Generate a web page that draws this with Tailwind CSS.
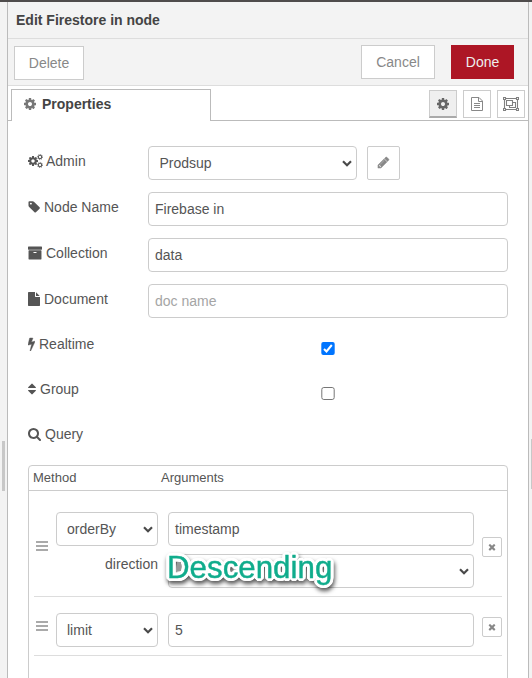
<!DOCTYPE html>
<html lang="en">
<head>
<meta charset="utf-8">
<title>Edit Firestore in node</title>
<script src="https://cdn.jsdelivr.net/npm/@tailwindcss/browser@4"></script>
</head>
<body class="w-[532px] h-[678px] overflow-hidden bg-[#f3f3f3] font-['Liberation_Sans',Arial,sans-serif] text-[14px] leading-5 text-[#555]">
<svg class="hidden">
  <symbol id="cog" viewBox="128 128 1536 1536"><path d="M1152 896q0-106-75-181t-181-75-181 75-75 181 75 181 181 75 181-75 75-181zm512-109v222q0 12-8 23t-20 13l-185 28q-19 54-39 91 35 50 107 138 10 12 10 25t-9 23q-27 37-99 108t-94 71q-12 0-26-9l-138-108q-44 23-91 38-16 136-29 186-7 28-36 28h-222q-14 0-24.5-8.5t-11.5-21.5l-28-184q-49-16-90-37l-141 107q-10 9-25 9-14 0-25-11-126-114-165-168-7-10-7-23 0-12 8-23 15-21 51-66.5t54-70.5q-27-50-41-99l-183-27q-13-2-21-12.5t-8-23.5v-222q0-12 8-23t19-13l186-28q14-46 39-92-40-57-107-138-10-12-10-24 0-10 9-23 26-36 98.500-107.500t94.500-71.500q13 0 26 10l138 107q44-23 91-38 16-136 29-186 7-28 36-28h222q14 0 24.500 8.500t11.500 21.500l28 184q49 16 90 37l142-107q9-9 24-9 13 0 25 10 129 119 165 170 7 8 7 22 0 12-8 23-15 21-51 66.500t-54 70.500q26 50 41 98l183 28q13 2 21 12.500t8 23.500z"/></symbol>
  <symbol id="times" viewBox="0 0 1792 1792"><path d="M1490 1322q0 40-28 68l-136 136q-28 28-68 28t-68-28l-294-294-294 294q-28 28-68 28t-68-28l-136-136q-28-28-28-68t28-68l294-294-294-294q-28-28-28-68t28-68l136-136q28-28 68-28t68 28l294 294 294-294q28-28 68-28t68 28l136 136q28 28 28 68t-28 68l-294 294 294 294q28 28 28 68z"/></symbol>
  <symbol id="chev" viewBox="0 0 10 7"><path d="M1 1.300L5 5.200 9 1.300" fill="none" stroke="#4a4a4a" stroke-width="2.200"/></symbol>
</svg>
<div class="h-[2px] bg-[#4f4c4c]"></div>
<div class="flex h-[676px]">
  <div class="w-[7px] flex items-start pt-[439px] pl-[2px]"><div class="w-[3px] h-[50px] bg-[#c8c8c8]"></div></div>
  <main class="w-[522px] border-x border-[#bbb] bg-white flex flex-col">
    <header class="h-[37px] shrink-0 bg-[#f3f3f3] border-b border-[#ddd] pl-2 pt-2 font-bold text-[#444]">Edit Firestore in node</header>
    <div class="h-[47px] shrink-0 bg-[#f3f3f3] border-b border-[#ddd] flex items-start pl-[6px] pr-[14px] pt-[6px] text-[#888]">
      <button class="mt-px w-[70px] h-[34px] border border-[#ccc] bg-white">Delete</button>
      <button class="ml-auto w-[74px] h-[34px] border border-[#ccc] bg-white">Cancel</button>
      <button class="ml-4 w-[63px] h-[34px] bg-[#ad1625] text-[#eee]">Done</button>
    </div>
    <div class="h-[35px] shrink-0 flex items-end">
      <div class="w-[3px] border-b border-[#bbb]"></div>
      <div class="w-[200px] h-[32px] border border-b-0 border-[#bbb] flex items-center pl-3 pb-[3px] font-bold text-[#444]"><svg class="w-3 h-3 fill-[#777] mr-[6px]"><use href="#cog"/></svg>Properties</div>
      <div class="flex-1 h-[32px] border-b border-[#bbb] flex justify-end gap-[6px] pt-px pr-[3px]">
        <button class="w-7 h-7 border border-b-2 border-[#ccc] border-b-[#aaa] bg-[#efefef] flex items-center justify-center"><svg class="w-3 h-3 fill-[#666]"><use href="#cog"/></svg></button>
        <button class="w-7 h-7 border border-[#ccc] bg-white flex items-center justify-center"><svg class="w-3 h-[14px]" viewBox="0 0 12 14" fill="none" stroke="#888"><path d="M.5.5h7.500l3.500 3.500v9.500h-11zM7.500.5v4h4M3 6.500h6M3 8.500h6M3 10.500h6"/></svg></button>
        <button class="w-7 h-7 border border-[#ccc] bg-white flex items-center justify-center"><svg class="w-4 h-[14px]" viewBox="0 0 16 14" fill="none" stroke="#808080" stroke-width="1.100"><path d="M3 1.500h10M3 12.500h10M1.500 3v8M14.500 3v8M.5.500h2v2h-2zM13.500.5h2v2h-2zM.5 11.500h2v2h-2zM13.500 11.500h2v2h-2zM3.500 3.500h6v5h-6zM9.500 5.500h3v5h-6v-2"/></svg></button>
      </div>
    </div>
    <form class="pl-5 pr-5 pt-[25px]">
      <div class="flex h-[46px]">
        <label class="w-[120px] pt-[5px] flex gap-[3px]"><svg class="w-[15px] h-[14px] mt-[3px] fill-[#555]" viewBox="0 0 15 14"><use href="#cog" x="0" y="2" width="10" height="10"/><g fill="none" stroke="#555"><circle cx="12" cy="3" r="1.700" stroke-width="1.100"/><circle cx="12" cy="3" r="2.600" stroke-width=".8" stroke-dasharray="1 1.040"/><circle cx="12" cy="11" r="1.700" stroke-width="1.100"/><circle cx="12" cy="11" r="2.600" stroke-width=".8" stroke-dasharray="1 1.040"/></g></svg>Admin</label>
        <div class="w-[209px] h-[34px] border border-[#ccc] rounded flex items-center justify-between pl-[10.5px] pr-[4px]">Prodsup<svg class="w-[10px] h-[7px]"><use href="#chev"/></svg></div>
        <button type="button" class="ml-[10px] w-[33px] h-[34px] border border-[#ccc] rounded-[2px] flex items-center justify-center"><svg class="w-[13px] h-[13px] mb-px ml-[-1px] fill-[#888]" viewBox="0 0 1792 1792"><path d="M491 1536l91-91-235-235-91 91v107h128v128h107zm523-928q0-22-22-22-10 0-17 7l-542 542q-7 7-7 17 0 22 22 22 10 0 17-7l542-542q7-7 7-17zm-54-192l416 416-832 832h-416v-416zm683 96q0 53-37 90l-166 166-416-416 166-165q36-38 90-38 53 0 91 38l235 234q37 39 37 91z" stroke="#888" stroke-width="60"/></svg></button>
      </div>
      <div class="flex h-[46px]">
        <label class="w-[120px] pt-[5px] flex gap-1"><svg class="w-[12px] h-[14px] mt-[3px] fill-[#555]" viewBox="64 0 1600 1792"><path d="M576 448q0-53-37.500-90.500t-90.500-37.500-90.500 37.500-37.500 90.500 37.500 90.500 90.500 37.500 90.500-37.500 37.500-90.500zm1067 576q0 53-37 90l-491 492q-39 37-91 37-53 0-90-37l-715-716q-38-37-64.500-101t-26.500-117v-416q0-52 38-90t90-38h416q53 0 117 26.500t102 64.500l715 714q37 39 37 91z"/></svg>Node Name</label>
        <div class="w-[360px] h-[34px] border border-[#ccc] rounded flex items-center pl-[6px]">Firebase in</div>
      </div>
      <div class="flex h-[46px]">
        <label class="w-[120px] pt-[5px] flex gap-1"><svg class="w-[14px] h-[14px] mt-[3px] fill-[#555]" viewBox="64 64 1664 1664"><path d="M1088 832q0-26-19-45t-45-19h-256q-26 0-45 19t-19 45 19 45 45 19h256q26 0 45-19t19-45zm576-192v960q0 26-19 45t-45 19h-1408q-26 0-45-19t-19-45v-960q0-26 19-45t45-19h1408q26 0 45 19t19 45zm64-448v256q0 26-19 45t-45 19h-1536q-26 0-45-19t-19-45v-256q0-26 19-45t45-19h1536q26 0 45 19t19 45z"/></svg>Collection</label>
        <div class="w-[360px] h-[34px] border border-[#ccc] rounded flex items-center pl-[6px]">data</div>
      </div>
      <div class="flex h-[46px]">
        <label class="w-[120px] pt-[5px] flex gap-1"><svg class="w-3 h-[14px] mt-[3px] fill-[#555]" viewBox="128 0 1536 1792"><path d="M1152 512v-472q22 14 36 28l408 408q14 14 28 36h-472zm-128 32q0 40 28 68t68 28h544v1056q0 40-28 68t-68 28h-1344q-40 0-68-28t-28-68v-1600q0-40 28-68t68-28h800v544z"/></svg>Document</label>
        <div class="w-[360px] h-[34px] border border-[#ccc] rounded flex items-center pl-[6px] text-[#a5a5a5]">doc name</div>
      </div>
      <div class="flex h-[45px]">
        <label class="w-[293px] pt-1 flex gap-1"><svg class="w-[7px] h-[14px] mt-[3px] fill-[#555]" viewBox="448 0 896 1792"><path d="M1333 566q18 20 7 44l-540 1157q-13 25-42 25-4 0-14-2-17-5-25.500-19t-4.500-30l197-808-406 101q-4 1-12 1-18 0-31-11-18-15-13-39l201-825q4-16 16.500-26.500t28.500-10.500h328q19 0 32 12.500t13 29.500q0 8-5 18l-171 463 396-98q8-2 12-2 19 0 34 15z" stroke="#555" stroke-width="50"/></svg>Realtime</label>
        <svg class="w-[14px] h-[13px] mt-3" viewBox="0 0 14 13"><rect x=".3" width="13.400" height="13" rx="2" fill="#0075ff"/><path d="M3 7l2.500 2.500L10.800 3" fill="none" stroke="#fff" stroke-width="2"/></svg>
      </div>
      <div class="flex h-[45px]">
        <label class="w-[293px] pt-1 flex gap-1"><svg class="w-2 h-[14px] mt-[3px] fill-[#555]" viewBox="384 0 1024 1792"><path d="M1408 1088q0 26-19 45l-448 448q-19 19-45 19t-45-19l-448-448q-19-19-19-45t19-45 45-19h896q26 0 45 19t19 45zm0-384q0 26-19 45t-45 19h-896q-26 0-45-19t-19-45 19-45l448-448q19-19 45-19t45 19l448 448q19 19 19 45z"/></svg>Group</label>
        <svg class="w-[14px] h-[13px] mt-3" viewBox="0 0 14 13"><rect x=".8" y=".5" width="12.400" height="12" rx="2" fill="#fff" stroke="#767676"/></svg>
      </div>
      <div class="flex h-[45px]">
        <label class="pt-1 flex gap-1"><svg class="w-[13px] h-[14px] mt-1 fill-[#555]" viewBox="64 128 1664 1792"><path d="M1216 832q0-185-131.500-316.500t-316.500-131.500-316.500 131.500-131.500 316.500 131.500 316.500 316.500 131.500 316.500-131.500 131.500-316.500zm512 832q0 52-38 90t-90 38q-54 0-90-38l-343-342q-179 124-399 124-143 0-273.500-55.500t-225-150-150-225-55.500-273.500 55.500-273.500 150-225 225-150 273.500-55.500 273.500 55.500 225 150 150 225 55.500 273.500q0 220-124 399l343 343q37 37 37 90z"/></svg>Query</label>
      </div>
      <div class="w-[480px] h-[240px] border border-[#ccc] rounded">
        <div class="h-[25px] border-b border-[#ccc] flex text-[13px] leading-6 pl-1"><span class="w-32">Method</span><span>Arguments</span></div>
        <div class="mx-[5px] h-[106px] border-b border-[#ddd] flex pt-[21px]">
          <svg class="w-3 h-[10px] ml-[2px] mt-[29px]" viewBox="0 0 12 10"><path d="M0 1h12M0 5h12M0 9h12" stroke="#aaa" stroke-width="2"/></svg>
          <div class="ml-2 w-[102px]">
            <div class="h-[34px] border border-[#ccc] rounded flex items-center justify-between pl-[10px] pr-[4px]">orderBy<svg class="w-[10px] h-[7px]"><use href="#chev"/></svg></div>
            <div class="text-right pt-2">direction</div>
          </div>
          <div class="ml-[10px] w-[306px]">
            <div class="h-[34px] border border-[#ccc] rounded flex items-center pl-[6px]">timestamp</div>
            <div class="relative mt-2 h-[34px] border border-[#ccc] rounded flex items-center pl-2 pr-[4px]">
              <svg class="ml-auto w-[10px] h-[7px]"><use href="#chev"/></svg>
              <span class="absolute left-[-2px] top-[-7px] text-[31.3px] leading-10 text-[#10ac8c] [-webkit-text-stroke:0.4px_#10ac8c] [text-shadow:3px_0_white,-3px_0_white,0_3px_white,0_-3px_white,2px_2px_white,-2px_2px_white,2px_-2px_white,-2px_-2px_white,3px_1px_white,-3px_1px_white,3px_-1px_white,-3px_-1px_white,1px_3px_white,-1px_3px_white,1px_-3px_white,-1px_-3px_white] drop-shadow-[1px_3px_2px_rgba(0,0,0,0.65)]">Descending</span>
              <div class="absolute left-[8px] top-[7px] w-1 h-[9px] bg-[#999] blur-[0.5px]"></div>
            </div>
          </div>
          <button type="button" class="ml-2 mt-[25px] w-5 h-5 border border-[#ccc] rounded-[2px] flex items-center justify-center"><svg class="w-[10px] h-[10px] fill-[#888]"><use href="#times"/></svg></button>
        </div>
        <div class="mx-[5px] h-[59px] border-b border-[#ddd] flex pt-4">
          <svg class="w-3 h-[10px] ml-[2px] mt-2" viewBox="0 0 12 10"><path d="M0 1h12M0 5h12M0 9h12" stroke="#aaa" stroke-width="2"/></svg>
          <div class="ml-2 w-[102px] h-[34px] border border-[#ccc] rounded flex items-center justify-between pl-[10px] pr-[4px]">limit<svg class="w-[10px] h-[7px]"><use href="#chev"/></svg></div>
          <div class="ml-[10px] w-[306px] h-[34px] border border-[#ccc] rounded flex items-center pl-[6px]">5</div>
          <button type="button" class="ml-2 mt-1 w-5 h-5 border border-[#ccc] rounded-[2px] flex items-center justify-center"><svg class="w-[10px] h-[10px] fill-[#888]"><use href="#times"/></svg></button>
        </div>
      </div>
    </form>
  </main>
  <div class="w-[3px] pt-[437px] pl-[2px]"><div class="w-px h-[50px] bg-[#c8c8c8]"></div></div>
</div>
</body>
</html>
